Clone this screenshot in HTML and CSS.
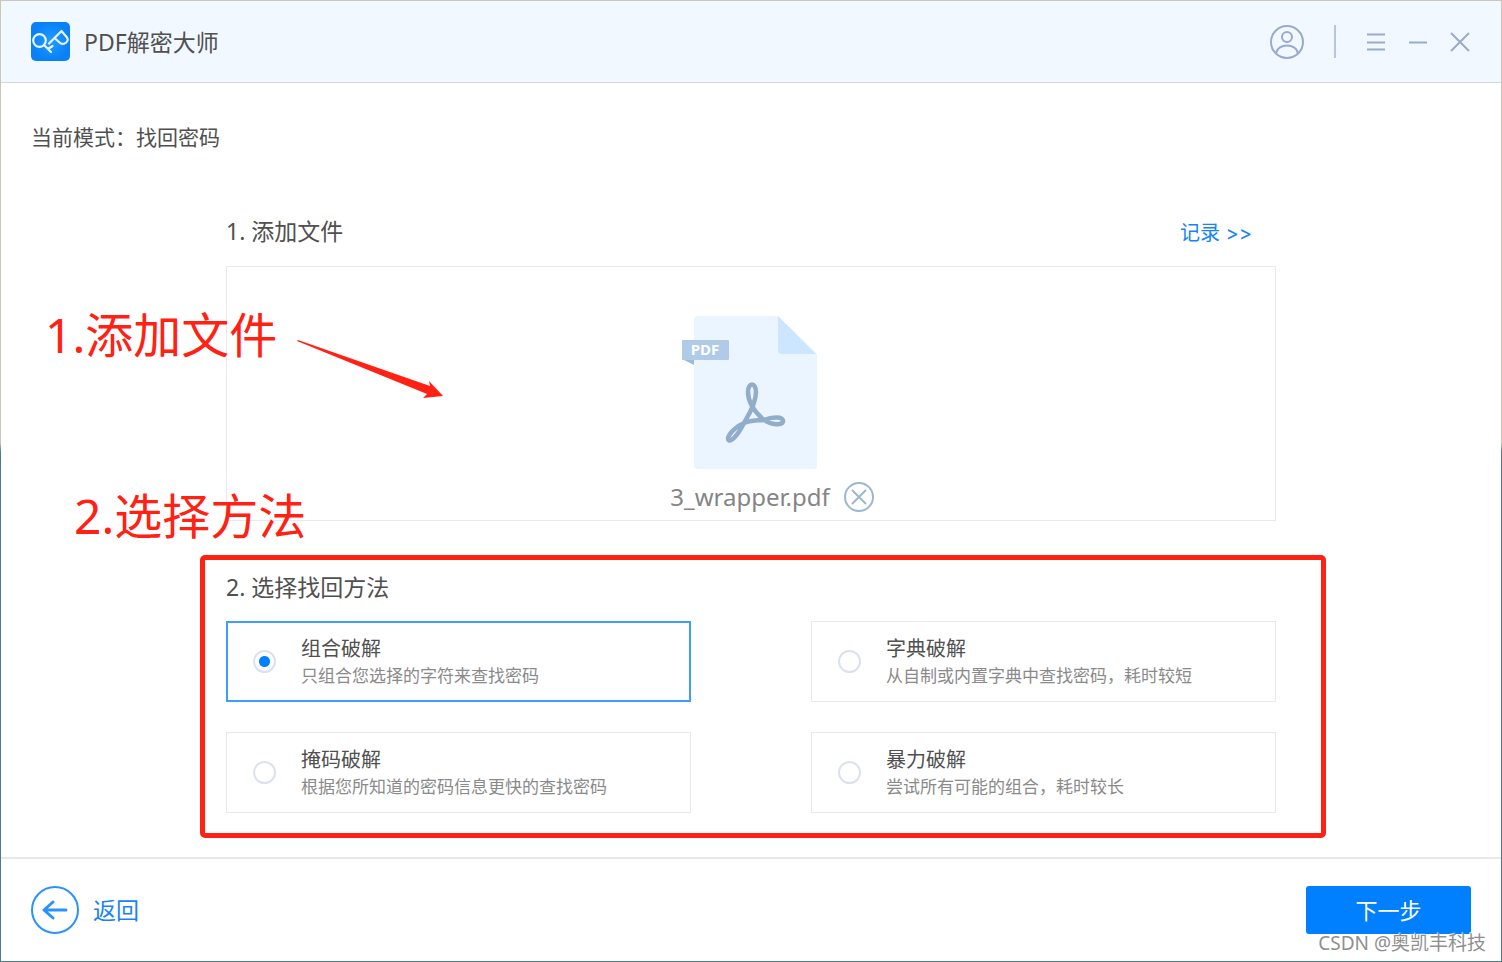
FILE: index.html
```html
<!DOCTYPE html>
<html lang="zh-CN">
<head>
<meta charset="utf-8">
<meta name="viewport" content="width=device-width, initial-scale=1">
<title>PDF解密大师</title>
<link rel="stylesheet" href="styles.css">
</head>
<body>
<div class="window">
  <header class="titlebar">
    <svg class="logo" viewBox="0 0 39 39" aria-hidden="true">
      <defs><radialGradient id="logo-fill"><stop offset="0" stop-color="#229cff"/><stop offset="1" stop-color="#0780f8"/></radialGradient></defs>
      <rect width="39" height="39" rx="5" fill="url(#logo-fill)"/>
      <g fill="none" stroke="#e6f4ff" stroke-width="2.2" stroke-linecap="round" stroke-linejoin="round">
        <circle cx="8.500" cy="18.500" r="6.300"/>
        <path d="M13 23l7 7M17 27l4.500-3M18 21.500L30.500 9l5.500 6.500c3 4-4 8.500-7.500 5l-5-4.500"/>
      </g>
    </svg>
    <h1 class="app-name">PDF解密大师</h1>
    <div class="controls">
      <button class="icon-button" type="button" aria-label="账户">
        <svg class="icon-user" viewBox="0 0 34 34"><circle cx="17" cy="17" r="16"/><circle cx="17" cy="12" r="5"/><path d="M6 28c2-10 20-10 22 0"/></svg>
      </button>
      <span class="divider"></span>
      <button class="icon-button" type="button" aria-label="菜单">
        <svg class="icon-small" viewBox="0 0 20 20"><path d="M1 2.500h18M1 10.500h18M1 17.500h18"/></svg>
      </button>
      <button class="icon-button" type="button" aria-label="最小化">
        <svg class="icon-small" viewBox="0 0 20 20"><path d="M1 10.500h18"/></svg>
      </button>
      <button class="icon-button" type="button" aria-label="关闭">
        <svg class="icon-small" viewBox="0 0 20 20"><path d="M1 1l18 18M19 1L1 19"/></svg>
      </button>
    </div>
  </header>

  <main class="main">
    <p class="mode">当前模式：找回密码</p>
    <div class="content">
      <section class="files">
        <div class="section-head">
          <h2 class="section-title">1. 添加文件</h2>
          <a class="records" href="#">记录 &gt;&gt;</a>
        </div>
        <div class="drop-zone">
          <svg class="file-icon" viewBox="0 0 140 153" aria-hidden="true">
            <path fill="#eaf5ff" d="M17 0h80l39 38v112q0 3-3 3H17q-4 0-4-4V4q0-4 4-4z"/>
            <path fill="#cde6ff" d="M97 0l38 38h-34q-4 0-4-4z"/>
            <path fill="#9cbbdb" d="M1 43h12v6z"/>
            <rect x="1" y="24" width="47" height="20" rx="1" fill="#b0cbe8"/>
            <text class="file-badge" x="24" y="39" text-anchor="middle">PDF</text>
            <path fill="none" stroke="#91adca" stroke-width="4.500" stroke-linejoin="round" d="M63 107C65 103 75 89 75 76C75 66 67 66 67 76C67 88 76 98 83 104C90 109 102 110 102 105C102 100 90 101 83 104C77 104 68 105 63 107C55 110 48 118 47 122C47 128 55 123 63 107z"/>
          </svg>
          <div class="file-row">
            <span class="file-name">3_wrapper.pdf</span>
            <button class="icon-button" type="button" aria-label="移除文件">
              <svg class="icon-remove" viewBox="0 0 30 30"><circle cx="15" cy="15" r="14"/><path d="M8 8l14 14M22 8L8 22"/></svg>
            </button>
          </div>
        </div>
        <span class="note note-add">1.添加文件</span>
        <svg class="note-arrow" viewBox="0 0 148 62" aria-hidden="true"><path fill="#ff2113" d="M1 2l1-1 132 46-1-5 14 15-20 2 4-4z"/></svg>
        <span class="note note-method">2.选择方法</span>
      </section>

      <section class="methods">
        <h2 class="section-title">2. 选择找回方法</h2>
        <div class="options">
          <label class="option"><input class="radio" type="radio" name="method" checked><span class="option-text"><span class="option-name">组合破解</span><span class="option-desc">只组合您选择的字符来查找密码</span></span></label>
          <label class="option"><input class="radio" type="radio" name="method"><span class="option-text"><span class="option-name">字典破解</span><span class="option-desc">从自制或内置字典中查找密码，耗时较短</span></span></label>
          <label class="option"><input class="radio" type="radio" name="method"><span class="option-text"><span class="option-name">掩码破解</span><span class="option-desc">根据您所知道的密码信息更快的查找密码</span></span></label>
          <label class="option"><input class="radio" type="radio" name="method"><span class="option-text"><span class="option-name">暴力破解</span><span class="option-desc">尝试所有可能的组合，耗时较长</span></span></label>
        </div>
        <span class="note-frame"></span>
      </section>
    </div>
  </main>

  <footer class="footer">
    <button class="back" type="button">
      <svg class="back-icon" viewBox="0 0 48 48" aria-hidden="true"><circle cx="24" cy="24" r="23"/><path class="back-arrow" d="M35 24H13M22 16l-9 8 9 8"/></svg>
      返回
    </button>
    <button class="next" type="button">下一步</button>
    <span class="watermark">CSDN @奥凯丰科技</span>
  </footer>
</div>
</body>
</html>
```
FILE: styles.css
```css
* { box-sizing: border-box; }

body {
  margin: 0;
  background: #fff;
  color: #505050;
  font-family: "Noto Sans", "Noto Sans CJK SC", sans-serif;
}

h1, h2, p { margin: 0; font-weight: 400; }

button {
  border: 0;
  padding: 0;
  background: none;
  color: inherit;
  font: inherit;
  cursor: pointer;
}

svg { display: block; }

.window {
  display: flex;
  flex-direction: column;
  min-height: 100vh;
  border: 1px solid;
  border-image: linear-gradient(#cdc5b8 46%, #4b7d88 47%) 1;
}

.titlebar {
  display: flex;
  align-items: center;
  height: 82px;
  padding: 0 31px 0 30px;
  background: #f1f8ff;
  border-bottom: 1px solid #d5d9dc;
}

.logo { width: 39px; height: 39px; }

.app-name {
  margin-left: 14px;
  font-size: 23px;
  line-height: 32px;
}

.controls {
  display: flex;
  align-items: center;
  gap: 22px;
  margin-left: auto;
}

.icon-button svg {
  fill: none;
  stroke: #9aaace;
  stroke-width: 2;
}

.icon-user { width: 34px; height: 34px; }
.icon-small { width: 20px; height: 20px; }

.divider {
  width: 2px;
  height: 33px;
  margin: 0 8px;
  background: #bac5dd;
}

.main {
  flex: 1;
  padding: 38px 0 44px;
}

.mode {
  padding-left: 30px;
  font-size: 21px;
  line-height: 32px;
}

.content {
  width: 70%;
  margin: 62px auto 0;
}

.files, .methods { position: relative; }

.section-head {
  display: flex;
  align-items: center;
  justify-content: space-between;
  padding-right: 24px;
}

.section-title {
  font-size: 23px;
  line-height: 32px;
}

.records {
  color: #1683fb;
  font-family: Inter, "Noto Sans CJK SC", sans-serif;
  font-size: 20px;
  font-feature-settings: "calt" 0;
  text-decoration: none;
}

.drop-zone {
  display: flex;
  flex-direction: column;
  align-items: center;
  margin-top: 19px;
  padding: 49px 0 7px;
  border: 1px solid #e9e9e9;
}

.file-icon { width: 140px; height: 153px; }

.file-badge {
  fill: #fff;
  font-size: 15px;
  font-weight: 700;
}

.file-row {
  display: flex;
  align-items: center;
  gap: 14px;
  margin-top: 12px;
  padding-left: 42px;
}

.file-name {
  color: #858585;
  font-size: 24px;
  line-height: 32px;
}

.icon-button .icon-remove {
  width: 30px;
  height: 30px;
  stroke: #9db7d1;
}

.methods { margin-top: 50px; }

.options {
  display: grid;
  grid-template-columns: 1fr 1fr;
  gap: 30px 120px;
  margin-top: 18px;
}

.option {
  display: flex;
  align-items: center;
  gap: 25px;
  height: 81px;
  padding: 0 26px;
  border: 1px solid #e9e9e9;
  cursor: pointer;
}

.option:has(:checked) {
  padding: 0 25px;
  border: 2px solid #3f9dfc;
}

.radio {
  appearance: none;
  flex: none;
  width: 23px;
  height: 23px;
  margin: 0;
  border: 2px solid #dce1f2;
  border-radius: 50%;
}

.radio:checked {
  background: radial-gradient(circle, #0080ff 5px, transparent 6px);
}

.option-text {
  display: flex;
  flex-direction: column;
}

.option-name {
  font-size: 20px;
  line-height: 28px;
}

.option-desc {
  color: #8a8a8a;
  font-size: 17px;
  line-height: 26px;
}

.note {
  position: absolute;
  color: #ff2113;
  font-size: 48px;
  line-height: 64px;
  white-space: nowrap;
}

.note-add { top: 88px; left: -181px; }
.note-method { top: 269px; left: -152px; }

.note-arrow {
  position: absolute;
  top: 124px;
  left: 70px;
  width: 148px;
  height: 62px;
}

.note-frame {
  position: absolute;
  top: -16px;
  right: -50px;
  bottom: -25px;
  left: -26px;
  border: 5px solid #ff2113;
  border-radius: 5px;
  pointer-events: none;
}

.footer {
  position: relative;
  display: flex;
  align-items: center;
  justify-content: space-between;
  height: 104px;
  padding: 0 30px;
  border-top: 2px solid #e8e8e8;
}

.back {
  display: flex;
  align-items: center;
  gap: 14px;
  color: #1683fb;
  font-size: 23px;
  line-height: 32px;
}

.back-icon {
  width: 48px;
  height: 48px;
  fill: none;
  stroke: #2a92fb;
  stroke-width: 2;
}

.back-arrow {
  stroke-width: 3;
  stroke-linecap: round;
  stroke-linejoin: round;
}

.next {
  width: 165px;
  height: 48px;
  border-radius: 3px;
  background: #0080ff;
  color: #fff;
  font-size: 22px;
  line-height: 32px;
}

.watermark {
  position: absolute;
  right: 15px;
  bottom: 4px;
  color: #8f8f8f;
  font-size: 19px;
  line-height: 28px;
  text-shadow: -1px -1px 0 #ffffffb0;
}
```
